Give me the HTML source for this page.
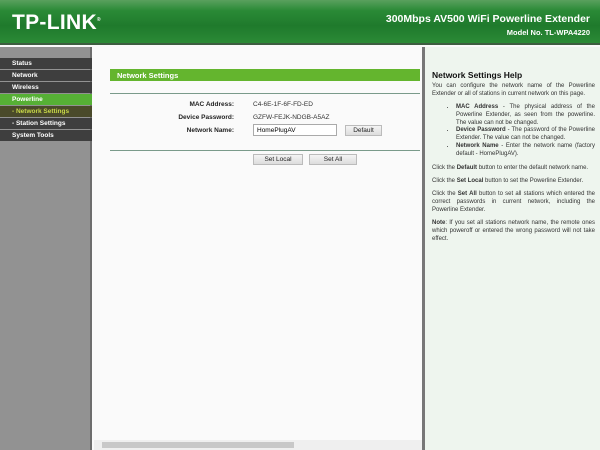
<!DOCTYPE html>
<html><head><style>
*{margin:0;padding:0;box-sizing:border-box}
body{width:600px;height:450px;overflow:hidden;font-family:"Liberation Sans",Arial,sans-serif;background:#fafafa;position:relative}
#hd{position:absolute;left:0;top:0;width:600px;height:45px;background:linear-gradient(#5aa05e,#2a8a36 25%,#1f7a2c 60%,#2b8a36);border-bottom:2px solid #3d5d40}
#logo{position:absolute;left:12px;top:11px;color:#fff;font-weight:bold;font-size:21px;letter-spacing:0.3px}
#t1{position:absolute;right:10px;top:13px;color:#fff;font-size:10.5px;font-weight:bold}
#t2{position:absolute;right:10px;top:28px;color:#fff;font-size:7.5px;font-weight:bold}
#sb{position:absolute;left:0;top:47px;width:92px;height:403px;background:#929292;border-right:2px solid #6d6d6d}
.m{position:absolute;left:0;width:92px;height:11px;background:#3e3e3e;color:#fff;font-size:6.5px;font-weight:bold;padding:2px 0 0 12px}
#main{position:absolute;left:94px;top:47px;width:328px;height:403px;background:#fafafa}
#rt{position:absolute;left:422px;top:47px;width:178px;height:403px;background:#eef5ee;border-left:3px solid #777}
.lbl{position:absolute;font-size:6.5px;font-weight:bold;color:#222;text-align:right;width:80px;left:154px}
.val{position:absolute;font-size:6.5px;color:#333;left:253px}
.btn{position:absolute;height:11px;background:linear-gradient(#f4f4f4,#dcdcdc);border:1px solid #bbb;font-size:6.5px;text-align:center;padding-top:1px;color:#222}
#rt p,#rt li{font-size:6px;color:#333;line-height:7.8px;text-align:justify}
#rt p{margin-bottom:5.5px}
</style></head><body>
<div id="hd"><div id="logo">TP-LINK<sup style="font-size:5px">®</sup></div><div id="t1">300Mbps AV500 WiFi Powerline Extender</div><div id="t2">Model No. TL-WPA4220</div></div>
<div id="sb"></div>
<div class="m" style="top:58px">Status</div>
<div class="m" style="top:70px">Network</div>
<div class="m" style="top:82px">Wireless</div>
<div class="m" style="top:94px;background:#56b035">Powerline</div>
<div class="m" style="top:106px;background:#4a4a2a;color:#c8d848">- Network Settings</div>
<div class="m" style="top:118px">- Station Settings</div>
<div class="m" style="top:130px">System Tools</div>
<div id="main"></div>
<div style="position:absolute;left:110px;top:69px;width:310px;height:12px;background:#64b52e;color:#fff;font-size:7.5px;font-weight:bold;padding:2px 0 0 7px">Network Settings</div>
<div style="position:absolute;left:110px;top:93px;width:310px;height:1px;background:#7a9a8a"></div>
<div class="lbl" style="top:101px">MAC Address:</div><div class="val" style="top:101px">C4-6E-1F-6F-FD-ED</div>
<div class="lbl" style="top:114px">Device Password:</div><div class="val" style="top:114px">GZFW-FEJK-NDGB-A5AZ</div>
<div class="lbl" style="top:127px">Network Name:</div>
<div style="position:absolute;left:253px;top:124px;width:84px;height:12px;background:#fff;border:1px solid #aaa;font-size:6.5px;padding:2px 3px">HomePlugAV</div>
<div class="btn" style="left:345px;top:125px;width:37px">Default</div>
<div style="position:absolute;left:110px;top:150px;width:310px;height:1px;background:#7a9a8a"></div>
<div class="btn" style="left:253px;top:154px;width:50px">Set Local</div>
<div class="btn" style="left:309px;top:154px;width:48px">Set All</div>
<div style="position:absolute;left:94px;top:440px;width:328px;height:10px;background:#efefef"></div>
<div style="position:absolute;left:102px;top:442px;width:192px;height:6px;background:#c8c8c8"></div>
<div id="rt">
<div style="position:absolute;left:7px;top:23px;font-size:8.5px;font-weight:bold;color:#111">Network Settings Help</div>
<div style="position:absolute;left:7px;top:36px;width:163px">
<p>You can configure the network name of the Powerline Extender or all of stations in current network on this page.</p>
<ul style="margin:0 0 6px 24px;list-style:disc"><li><b>MAC Address</b> - The physical address of the Powerline Extender, as seen from the powerline. The value can not be changed.</li><li><b>Device Password</b> - The password of the Powerline Extender. The value can not be changed.</li><li><b>Network Name</b> - Enter the network name (factory default - HomePlugAV).</li></ul>
<p>Click the <b>Default</b> button to enter the default network name.</p>
<p>Click the <b>Set Local</b> button to set the Powerline Extender.</p>
<p>Click the <b>Set All</b> button to set all stations which entered the correct passwords in current network, including the Powerline Extender.</p>
<p><b>Note</b>: If you set all stations network name, the remote ones which poweroff or entered the wrong password will not take effect.</p>
</div></div>
</body></html>
